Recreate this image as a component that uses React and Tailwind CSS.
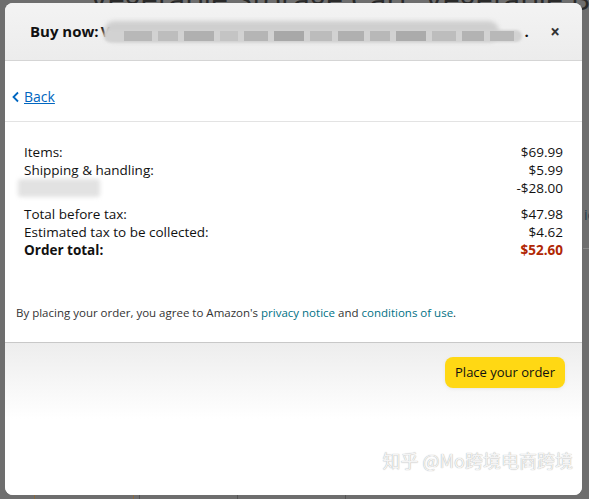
export default function App() {
  const rows = [
    ['Items:', '$69.99'],
    ['Shipping & handling:', '$5.99'],
  ]
  const rows2 = [
    ['Total before tax:', '$47.98'],
    ['Estimated tax to be collected:', '$4.62'],
  ]

  return (
    <div
      className="relative w-[589px] h-[499px] overflow-hidden bg-[#6e6e6e]"
      style={{ fontFamily: '"Open Sans", "Noto Sans", sans-serif' }}
    >
      {/* page behind the dimmed overlay */}
      <div className="absolute left-[90px] top-[-24px] whitespace-nowrap text-[30px] text-[#2a2a2a]">
        Vegetable Storage Cart: Vegetable Basket Bins for Kitchen, y
      </div>
      <div className="absolute left-[584px] top-[204px] text-[14px] text-[#1d3b4f]">ic</div>
      <div className="absolute left-[583px] top-[248px] h-px w-[10px] bg-[#888]" />
      <div className="absolute left-[34px] top-[494px] h-[10px] w-px bg-[#8a6a40]" />
      <div className="absolute left-[133px] top-[494px] h-[10px] w-px bg-[#8a6a40]" />
      <div className="absolute left-[139px] top-[494px] h-[10px] w-px bg-[#555]" />
      <div className="absolute left-[237px] top-[494px] h-[10px] w-px bg-[#555]" />
      <div className="absolute left-[345px] top-[494px] h-[10px] w-px bg-[#555]" />

      {/* modal */}
      <div className="absolute left-[5px] top-[3px] flex h-[492px] w-[577px] flex-col overflow-hidden rounded-[8px] bg-white">
        <header className="flex h-[58px] shrink-0 items-center border-b border-[#d5d5d5] bg-gradient-to-b from-[#f3f3f3] to-[#ececec] pl-[25px] pr-[20px]">
          <span className="text-[15px] font-bold text-[#111]">Buy now: </span>
          <span className="ml-[2px] text-[15px] font-bold text-[#111]">V</span>
          <div className="relative ml-[-6px] h-[21px] w-[418px]">
            <div className="absolute left-0 top-0 h-[21px] w-[395px] rounded-[10px] bg-[#cfcfcf] blur-[2px]" />
            <div className="absolute left-0 top-[9px] h-[12px] w-[418px] rounded-[6px] bg-[#d2d2d2] blur-[1px]" />
            <div className="absolute left-[20px] top-[10px] flex gap-[6px]">
              <div className="h-[10px] w-[28px] bg-[#b8b8b8]" />
              <div className="h-[10px] w-[20px] bg-[#bdbdbd]" />
              <div className="h-[10px] w-[30px] bg-[#b0b0b0]" />
              <div className="h-[10px] w-[18px] bg-[#c4c4c4]" />
              <div className="h-[10px] w-[24px] bg-[#b5b5b5]" />
              <div className="h-[10px] w-[30px] bg-[#a8a8a8]" />
              <div className="h-[10px] w-[22px] bg-[#bcbcbc]" />
              <div className="h-[10px] w-[26px] bg-[#b0b0b0]" />
              <div className="h-[10px] w-[20px] bg-[#b8b8b8]" />
              <div className="h-[10px] w-[30px] bg-[#ababab]" />
              <div className="h-[10px] w-[24px] bg-[#bdbdbd]" />
              <div className="h-[10px] w-[22px] bg-[#b3b3b3]" />
              <div className="h-[10px] w-[24px] bg-[#b8b8b8]" />
            </div>
          </div>
          <span className="ml-[2px] text-[15px] font-bold text-[#111]">.</span>
          <button className="ml-auto mr-[2px] text-[17px] font-bold leading-none text-[#333]">×</button>
        </header>

        <div className="flex h-[61px] shrink-0 items-end border-b border-[#e3e3e3] pb-[14px] pl-[6px]">
          <a className="flex items-center text-[14px] text-[#0066c0]">
            <svg width="10" height="12" viewBox="0 0 10 12" className="mr-[3px]">
              <path d="M7 1.5 L2.5 6 L7 10.5" fill="none" stroke="#0066c0" strokeWidth="1.8" />
            </svg>
            <span className="underline">Back</span>
          </a>
        </div>

        <div className="flex-1 px-[19px] pt-[21px] text-[13.5px] leading-[18px] text-[#111]">
          {rows.map(([l, v]) => (
            <div key={l} className="flex justify-between">
              <span>{l}</span>
              <span>{v}</span>
            </div>
          ))}
          <div className="flex justify-between">
            <div className="ml-[-6px] h-[18px] w-[82px] rounded-[3px] bg-[#e2e2e2] blur-[2px]" />
            <span>-$28.00</span>
          </div>
          <div className="mt-[8px]" />
          {rows2.map(([l, v]) => (
            <div key={l} className="flex justify-between">
              <span>{l}</span>
              <span>{v}</span>
            </div>
          ))}
          <div className="flex justify-between font-bold">
            <span>Order total:</span>
            <span className="text-[#b12704]">$52.60</span>
          </div>

          <p className="ml-[-8px] mt-[45px] text-[11.5px] text-[#333]">
            By placing your order, you agree to Amazon's{' '}
            <a className="text-[#007185]">privacy notice</a> and{' '}
            <a className="text-[#007185]">conditions of use</a>.
          </p>
        </div>

        <footer className="relative h-[153px] shrink-0 border-t border-[#c8c8c8] bg-gradient-to-b from-[#ededed] via-white to-white">
          <div className="flex justify-end pr-[17px] pt-[14px]">
            <button className="h-[31px] w-[120px] rounded-[8px] bg-[#ffd814] text-[13px] text-[#0f1111] shadow-[0_1px_3px_rgba(213,217,217,0.5)]">
              Place your order
            </button>
          </div>
          <div
            className="absolute bottom-[21px] right-[9px] text-[18px] text-[#f4f4f4]"
            style={{ fontFamily: '"Noto Sans CJK SC", sans-serif', textShadow: '0 0 1px #999' }}
          >
            知乎 @Mo跨境电商跨境
          </div>
        </footer>
      </div>
    </div>
  )
}
